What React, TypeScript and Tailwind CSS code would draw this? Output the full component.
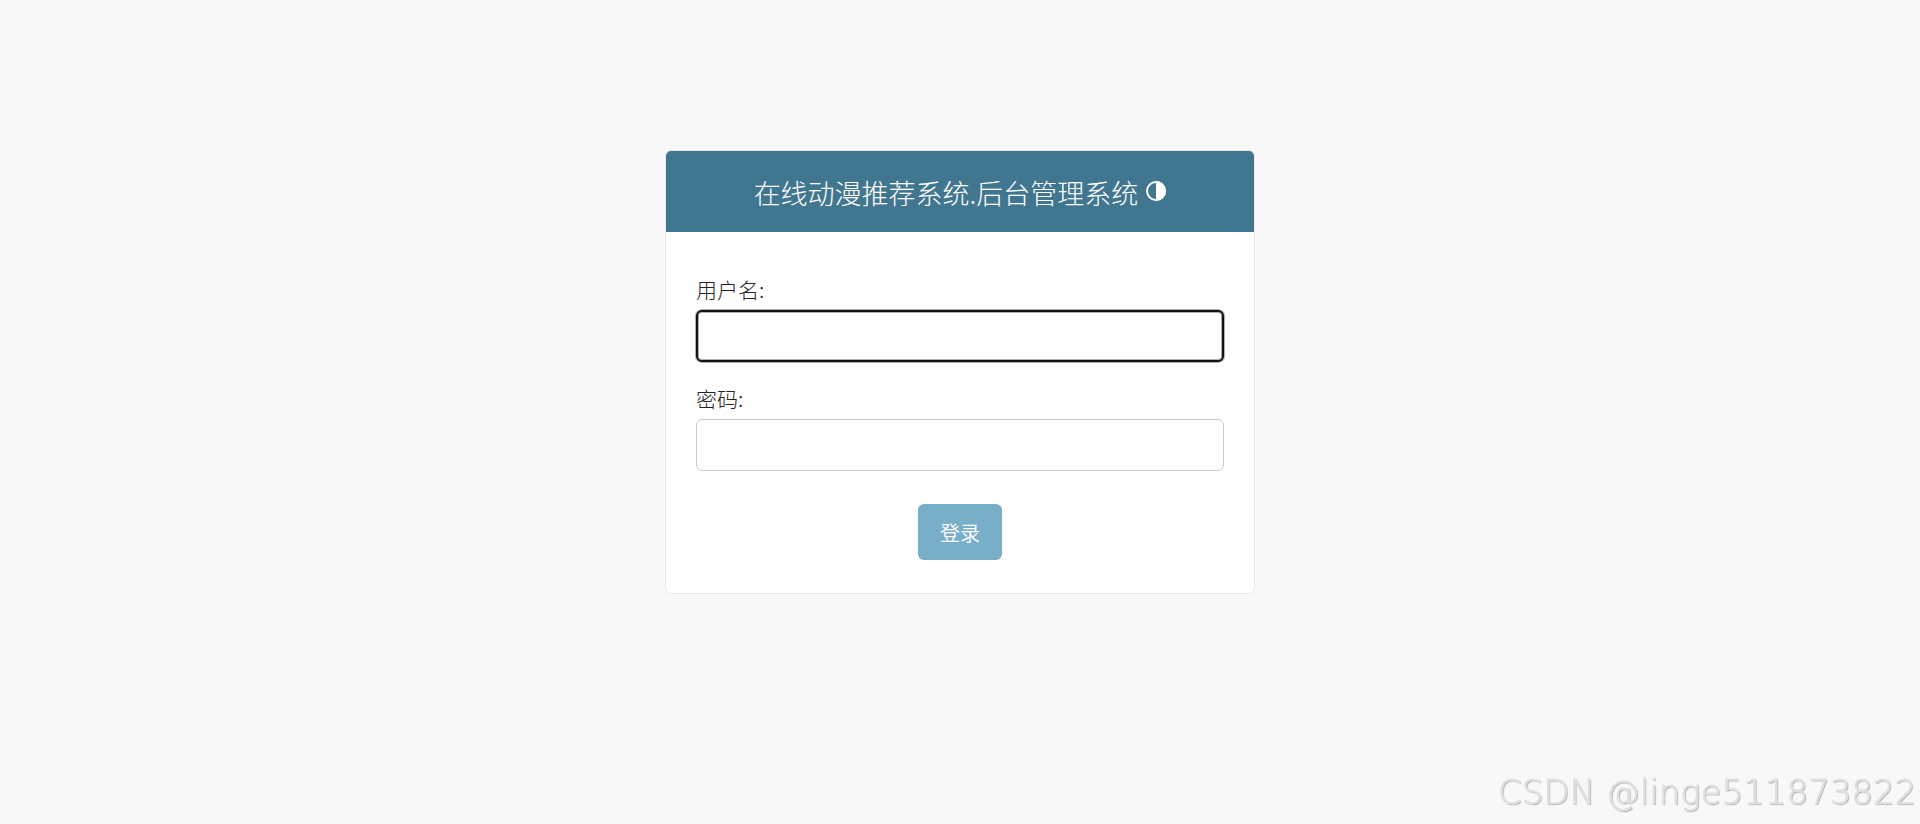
import React from "react";

interface FieldProps {
  id: string;
  label: string;
  type: string;
  active?: boolean;
}

const Field: React.FC<FieldProps> = ({ id, label, type, active }) => (
  <div className="flex flex-col gap-[6px]">
    <label htmlFor={id} className="text-[21px] leading-[30px] text-[#222]">
      {label}
    </label>
    <input
      id={id}
      type={type}
      className={
        active
          ? "h-[52px] w-full rounded-md border-2 border-[#101010] bg-white px-4 text-xl shadow-[0_0_0_1px_#b0b0b0,inset_0_0_0_1px_#b0b0b0] outline-none"
          : "h-[52px] w-full rounded-md border border-[#ccc] bg-white px-4 text-xl outline-none"
      }
    />
  </div>
);

const ContrastIcon: React.FC = () => (
  <svg viewBox="0 0 20 20" className="size-5" aria-hidden="true">
    <circle cx="10" cy="10" r="9" fill="none" stroke="currentColor" strokeWidth="2" />
    <path d="M10 0a10 10 0 0 1 0 20z" fill="currentColor" />
  </svg>
);

export default function App() {
  return (
    <div className="relative flex min-h-screen flex-col items-center bg-[#f8f8f8] px-4 pt-[150px] font-['Noto_Sans_CJK_SC',sans-serif] font-light">
      <main className="w-full max-w-[590px] overflow-hidden rounded-md border border-[#e8e8e8] bg-white">
        <header className="flex items-center justify-center gap-2 bg-[#417690] pt-[21px] pb-[19px] text-white">
          <h1 className="text-[27px] leading-[41px]">在线动漫推荐系统.后台管理系统</h1>
          <button type="button" aria-label="切换主题" className="pb-1">
            <ContrastIcon />
          </button>
        </header>
        <form className="flex flex-col px-[30px] pt-[42px] pb-[33px]">
          <div className="flex flex-col gap-[21px]">
            <Field id="username" label="用户名:" type="text" active />
            <Field id="password" label="密码:" type="password" />
          </div>
          <button
            type="button"
            className="mt-[33px] h-14 self-center rounded-md bg-[#79aec8] px-[22px] pt-px text-xl font-[350] text-white"
          >
            登录
          </button>
        </form>
      </main>
      <p className="absolute right-1 bottom-2 font-['DejaVu_Sans',sans-serif] text-[34px] leading-12 font-extralight text-[#e0e0e0] will-change-transform [-webkit-text-stroke:1px_#e0e0e0] [text-shadow:1px_1px_1px_#999,-1px_-1px_1px_#fff]">
        CSDN @linge511873822
      </p>
    </div>
  );
}
